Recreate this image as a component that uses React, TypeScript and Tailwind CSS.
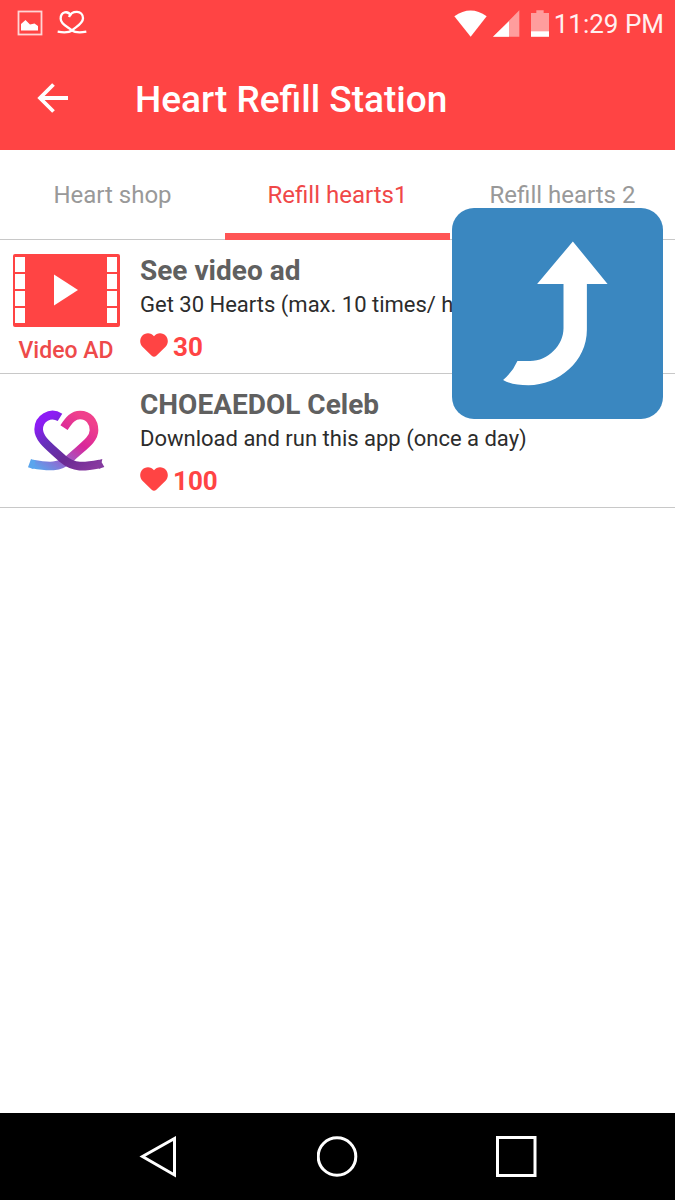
import { useState } from "react";

const TABS = ["Heart shop", "Refill hearts1", "Refill hearts 2"];

const OFFERS = [
  { id: "video", title: "See video ad", desc: "Get 30 Hearts (max. 10 times/ hour)", hearts: 30 },
  { id: "celeb", title: "CHOEAEDOL Celeb", desc: "Download and run this app (once a day)", hearts: 100 },
];

function StatusBar() {
  return (
    <div className="flex h-[46px] items-center justify-between pl-[17px] pr-[11px]">
      <div className="flex items-center gap-[14px]">
        <svg width="26" height="26" viewBox="0 0 26 26" aria-hidden="true">
          <rect x="1.5" y="1.5" width="23" height="23" fill="none" stroke="#ffd5d5" strokeWidth="1.8" />
          <path d="M4 20.500V14L8.500 10L13 14.500L17.500 13.500L21 16V20.500Z" fill="#fff" />
        </svg>
        <svg width="30" height="26" viewBox="0 0 90 78" fill="none" stroke="#fff" strokeWidth="7" aria-hidden="true">
          <path d="M42 17C33 1 11 4 11 26C11 43 32 50 45 61C55 69 70 68 88 65" />
          <path d="M36 21C44 1 78 -1 78 25C78 42 57 50 45 61C35 69 20 68 2 65" />
        </svg>
      </div>
      <div className="flex items-center">
        <svg width="34" height="27" viewBox="0 0 102 81" aria-hidden="true">
          <path d="M1 19Q50 -16 98 19L50 80Z" fill="#fff" />
        </svg>
        <svg className="ml-[5px]" width="27" height="27" viewBox="0 0 81 81" aria-hidden="true">
          <path d="M79 1V80H0Z" fill="#ff9d9d" />
          <path d="M48 34V80H0Z" fill="#fff" />
        </svg>
        <svg className="ml-[11px]" width="18" height="27" viewBox="0 0 54 81" aria-hidden="true">
          <path d="M16 1H38V9H54V80H0V9H16Z" fill="#ff9d9d" />
          <path d="M0 64H54V80H0Z" fill="#fff" />
        </svg>
        <span className="ml-[5px] pt-0.5 text-[26px] leading-8 text-[#fff0f0]">11:29 PM</span>
      </div>
    </div>
  );
}

function VideoIcon() {
  return (
    <div className="flex flex-col items-center pt-2">
      <svg width="107" height="73" viewBox="0 0 107 73" aria-hidden="true">
        <rect width="107" height="73" rx="2" fill="#ff4444" />
        {[3, 20, 37, 54].map(y => (
          <g key={y} fill="#fff">
            <rect x="2" y={y} width="10" height="15" />
            <rect x="94" y={y} width="10" height="15" />
          </g>
        ))}
        <path d="M41 20.500L65 36L41 51.500Z" fill="#fff" />
      </svg>
      <span className="mt-2 text-[23px] leading-8 font-medium whitespace-nowrap text-[#ee4a4a]">Video AD</span>
    </div>
  );
}

function CelebIcon() {
  return (
    <svg width="78" height="63" viewBox="80 105 234 189" fill="none" aria-hidden="true">
      <defs>
        <linearGradient id="pink" gradientUnits="userSpaceOnUse" x1="230" y1="115" x2="110" y2="285">
          <stop offset="0" stopColor="#f0418c" />
          <stop offset="0.35" stopColor="#d9269a" />
          <stop offset="0.7" stopColor="#9464cf" />
          <stop offset="1" stopColor="#5aa5ed" />
        </linearGradient>
        <linearGradient id="purple" gradientUnits="userSpaceOnUse" x1="165" y1="115" x2="285" y2="285">
          <stop offset="0" stopColor="#8d1cf5" />
          <stop offset="0.3" stopColor="#6530b8" />
          <stop offset="0.65" stopColor="#6a2a94" />
          <stop offset="1" stopColor="#8a3aa0" />
        </linearGradient>
      </defs>
      <path d="M191 161C207 137 219 123 239 123C265 123 281 143 281 169C281 197 250 215 207 255C178 281 145 279 96 270" stroke="url(#pink)" strokeWidth="26" />
      <path d="M92 255L83 280L99 285L106 260Z" fill="#5aa5ed" />
      <path d="M179 130C150 112 115 133 115 166C115 195 145 216 188 255C221 283 251 279 298 270" stroke="url(#purple)" strokeWidth="26" />
      <path d="M292 259L306 255L304 265L312 279L296 284Z" fill="#843b9f" />
    </svg>
  );
}

function Heart() {
  return (
    <svg className="mb-[3px]" width="28" height="24" viewBox="0 0 84 72" aria-hidden="true">
      <path d="M42 10C51 -3 69 -2 78 9C86 20 85 33 76 42L49 68Q42 74 35 68L8 42C-1 33 -2 20 6 9C15 -2 33 -3 42 10Z" fill="#ff4444" />
    </svg>
  );
}

export default function App() {
  const [tab, setTab] = useState(1);

  return (
    <div className="relative flex min-h-screen w-full flex-col bg-white font-[Roboto,sans-serif]">
      <header className="bg-[#ff4444] text-white">
        <StatusBar />
        <div className="flex h-[104px] items-center pl-[37px]">
          <button aria-label="Back">
            <svg width="32" height="30" viewBox="0 0 32 30" fill="none" stroke="#fff" strokeWidth="3.800" aria-hidden="true">
              <path d="M31 15H4M16.500 1.500L3 15L16.500 28.500" />
            </svg>
          </button>
          <h1 className="ml-[66px] pt-1 text-[37px] leading-10 font-medium">Heart Refill Station</h1>
        </div>
      </header>

      <div role="tablist" className="grid h-[90px] grid-cols-3 border-b border-[#c8c8c8]">
        {TABS.map((label, i) => (
          <button
            key={label}
            role="tab"
            aria-selected={tab === i}
            onClick={() => setTab(i)}
            className={`-mb-px border-b-[7px] pt-1.5 text-2xl ${
              tab === i ? "border-[#ff5555] text-[#f04848]" : "border-transparent text-[#999999]"
            }`}>
            {label}
          </button>
        ))}
      </div>

      <main className="flex-1">
        <ul>
          {OFFERS.map(o => (
            <li key={o.id} className="border-b border-[#c8c8c8]">
              <button className="flex h-[133px] w-full items-center text-left">
                <span className="flex w-[132px] shrink-0 justify-center">
                  {o.id === "video" ? <VideoIcon /> : <CelebIcon />}
                </span>
                <span className="flex min-w-0 flex-col pt-1 pl-2">
                  <span className="text-[28px] leading-9 font-bold text-[#606060]">{o.title}</span>
                  <span className="truncate text-[22px] leading-8 text-[#2c2c2c]">{o.desc}</span>
                  <span className="mt-2 flex items-center gap-[5px] text-[26px] leading-9 font-bold text-[#ff4444]">
                    <Heart />
                    {o.hearts}
                  </span>
                </span>
              </button>
            </li>
          ))}
        </ul>
      </main>

      {/* Floating shortcut */}
      <button
        aria-label="Go up"
        className="absolute top-[208px] right-3 size-[211px] rounded-[22px] bg-[#3a87c0]">
        <svg className="size-full" viewBox="36 175 632 632" aria-hidden="true">
          <path d="M398 275L502 403H440V540C440 635 355 706 265 706C235 706 210 702 189 690Q217 667 232 633H270C325 633 370 585 370 535V403H291Z" fill="#fff" />
        </svg>
      </button>

      <nav className="flex h-[87px] items-center justify-center bg-black">
        <button aria-label="Back" className="flex w-[179px] justify-center">
          <svg width="42" height="42" viewBox="0 0 42 42" fill="none" stroke="#fff" strokeWidth="3" aria-hidden="true">
            <path d="M36.500 2.500V39L4.500 20.500Z" />
          </svg>
        </button>
        <button aria-label="Home" className="flex w-[179px] justify-center">
          <svg width="42" height="42" viewBox="0 0 42 42" fill="none" stroke="#fff" strokeWidth="3" aria-hidden="true">
            <circle cx="20" cy="20.500" r="18.800" />
          </svg>
        </button>
        <button aria-label="Recent apps" className="flex w-[179px] justify-center">
          <svg width="42" height="42" viewBox="0 0 42 42" fill="none" stroke="#fff" strokeWidth="3" aria-hidden="true">
            <rect x="1.5" y="1.5" width="37.500" height="38" />
          </svg>
        </button>
      </nav>
    </div>
  );
}
